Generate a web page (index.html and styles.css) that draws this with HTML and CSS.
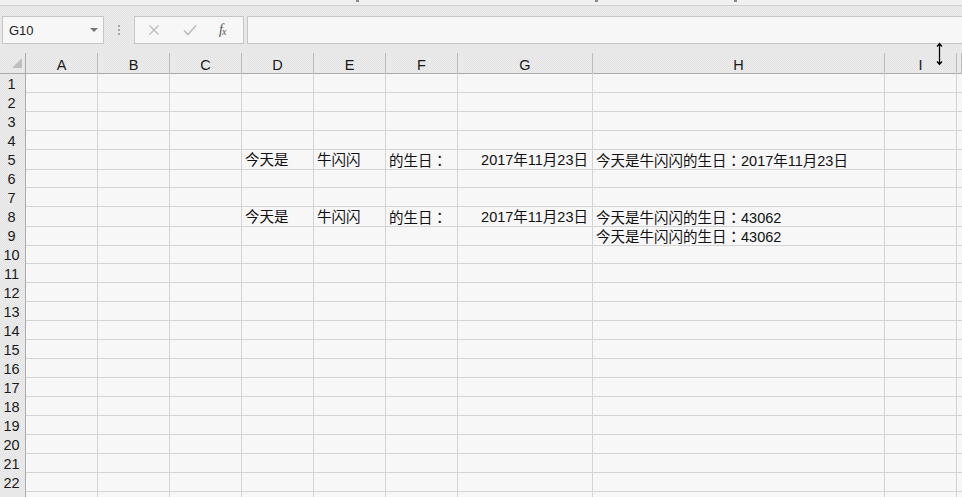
FILE: index.html
```html
<!DOCTYPE html>
<html>
<head>
  <meta charset="UTF-8">
  <title>牛闪闪的生日</title>
  <link rel="stylesheet" href="styles.css">
</head>
<body>
  <div class="topstrip">
    <span class="tick t1"></span><span class="tick t2"></span><span class="tick t3"></span>
  </div>
  <div class="toolband">
    <div class="formulabar">
      <div class="namebox"><span class="ref">G10</span><span class="drop"></span></div>
      <div class="grip"><i></i><i></i><i></i></div>
      <div class="fxbox">
        <svg class="ico" width="12" height="12" viewBox="0 0 12 12"><path d="M1.5 1.5l9 9M10.5 1.5l-9 9" stroke="#bdbdbd" stroke-width="1.3" fill="none"/></svg>
        <svg class="ico" width="14" height="12" viewBox="0 0 14 12"><path d="M1 6.5l4 4L13 1.5" stroke="#bdbdbd" stroke-width="1.6" fill="none"/></svg>
        <span class="fx">f<sub>x</sub></span>
      </div>
      <div class="input"></div>
    </div>
  </div>

  <div class="sheet">
    <div class="row head">
      <div class="corner"><span class="tri"></span></div>
      <div>A</div><div>B</div><div>C</div><div>D</div><div>E</div><div>F</div><div>G</div><div>H</div><div>I</div><div></div>
    </div>
    <div class="row"><div class="rh">1</div><div></div><div></div><div></div><div></div><div></div><div></div><div></div><div></div><div></div><div></div></div>
    <div class="row"><div class="rh">2</div><div></div><div></div><div></div><div></div><div></div><div></div><div></div><div></div><div></div><div></div></div>
    <div class="row"><div class="rh">3</div><div></div><div></div><div></div><div></div><div></div><div></div><div></div><div></div><div></div><div></div></div>
    <div class="row"><div class="rh">4</div><div></div><div></div><div></div><div></div><div></div><div></div><div></div><div></div><div></div><div></div></div>
    <div class="row"><div class="rh">5</div><div></div><div></div><div></div><div>今天是</div><div>牛闪闪</div><div>的生日<span class="colon">：</span></div><div class="num">2017年11月23日</div><div>今天是牛闪闪的生日<span class="colon">：</span>2017年11月23日</div><div></div><div></div></div>
    <div class="row"><div class="rh">6</div><div></div><div></div><div></div><div></div><div></div><div></div><div></div><div></div><div></div><div></div></div>
    <div class="row"><div class="rh">7</div><div></div><div></div><div></div><div></div><div></div><div></div><div></div><div></div><div></div><div></div></div>
    <div class="row"><div class="rh">8</div><div></div><div></div><div></div><div>今天是</div><div>牛闪闪</div><div>的生日<span class="colon">：</span></div><div class="num">2017年11月23日</div><div>今天是牛闪闪的生日<span class="colon">：</span>43062</div><div></div><div></div></div>
    <div class="row"><div class="rh">9</div><div></div><div></div><div></div><div></div><div></div><div></div><div></div><div>今天是牛闪闪的生日<span class="colon">：</span>43062</div><div></div><div></div></div>
    <div class="row"><div class="rh">10</div><div></div><div></div><div></div><div></div><div></div><div></div><div></div><div></div><div></div><div></div></div>
    <div class="row"><div class="rh">11</div><div></div><div></div><div></div><div></div><div></div><div></div><div></div><div></div><div></div><div></div></div>
    <div class="row"><div class="rh">12</div><div></div><div></div><div></div><div></div><div></div><div></div><div></div><div></div><div></div><div></div></div>
    <div class="row"><div class="rh">13</div><div></div><div></div><div></div><div></div><div></div><div></div><div></div><div></div><div></div><div></div></div>
    <div class="row"><div class="rh">14</div><div></div><div></div><div></div><div></div><div></div><div></div><div></div><div></div><div></div><div></div></div>
    <div class="row"><div class="rh">15</div><div></div><div></div><div></div><div></div><div></div><div></div><div></div><div></div><div></div><div></div></div>
    <div class="row"><div class="rh">16</div><div></div><div></div><div></div><div></div><div></div><div></div><div></div><div></div><div></div><div></div></div>
    <div class="row"><div class="rh">17</div><div></div><div></div><div></div><div></div><div></div><div></div><div></div><div></div><div></div><div></div></div>
    <div class="row"><div class="rh">18</div><div></div><div></div><div></div><div></div><div></div><div></div><div></div><div></div><div></div><div></div></div>
    <div class="row"><div class="rh">19</div><div></div><div></div><div></div><div></div><div></div><div></div><div></div><div></div><div></div><div></div></div>
    <div class="row"><div class="rh">20</div><div></div><div></div><div></div><div></div><div></div><div></div><div></div><div></div><div></div><div></div></div>
    <div class="row"><div class="rh">21</div><div></div><div></div><div></div><div></div><div></div><div></div><div></div><div></div><div></div><div></div></div>
    <div class="row"><div class="rh">22</div><div></div><div></div><div></div><div></div><div></div><div></div><div></div><div></div><div></div><div></div></div>
    <div class="row"><div class="rh">23</div><div></div><div></div><div></div><div></div><div></div><div></div><div></div><div></div><div></div><div></div></div>
  </div>

  <svg class="cursor" width="13" height="28" viewBox="0 0 13 28">
    <path d="M6.5 1.5L10.5 6H8V22H10.5L6.5 26.5L2.5 22H5V6H2.5Z" fill="#fff"/>
    <path d="M6.5 3.5V24.5M4 6.5L6.5 3.5L9 6.5M4 21.5L6.5 24.5L9 21.5" stroke="#000" stroke-width="1.4" fill="none"/>
  </svg>
</body>
</html>
```

FILE: styles.css
```css
*{
  margin:0;
  padding:0;
  box-sizing:border-box;
}
body{
  width:962px;
  height:497px;
  overflow:hidden;
  background:#f7f7f7;
  font-family:"Liberation Sans","Noto Sans CJK SC",sans-serif;
  color:#111;
  position:relative;
}
.topstrip{
  height:6px;
  background:#f0f0f0;
  border-bottom:1px solid #d0d0d0;
  position:relative;
}
.tick{
  position:absolute;
  top:0;
  width:3px;
  height:2px;
  background:#8a8a8a;
}
.t1{left:356px;}
.t2{left:595px;}
.t3{left:734px;}

.toolband{
  padding:10px 0 9px 2px;
  background-color:#e8e8e8;
  background-image:repeating-conic-gradient(#e4e4e4 0 25%,#ececec 0 50%);
  background-size:2px 2px;
}
.formulabar{
  display:flex;
  height:28px;
}
.namebox{
  width:102px;
  background:#f7f7f7;
  border:1px solid #c6c6c6;
  display:flex;
  align-items:center;
  justify-content:space-between;
  padding:0 5px 0 6px;
  font-size:13px;
  color:#222;
}
.drop{
  width:0;
  height:0;
  border-left:4px solid transparent;
  border-right:4px solid transparent;
  border-top:4px solid #777;
}
.grip{
  width:30px;
  display:flex;
  flex-direction:column;
  align-items:center;
  justify-content:center;
  gap:2px;
}
.grip i{
  display:block;
  width:2px;
  height:2px;
  background:#a6a6a6;
}
.fxbox{
  width:110px;
  background:#f7f7f7;
  border:1px solid #c6c6c6;
  display:flex;
  align-items:center;
  padding-left:13px;
}
.fxbox .ico{
  margin-right:23px;
}
.fxbox .ico + .ico{
  margin-right:22px;
}
.fx{
  font-family:"Liberation Serif",serif;
  font-style:italic;
  font-size:14px;
  color:#555;
  letter-spacing:-1px;
}
.fx sub{
  font-size:10px;
  vertical-align:-1px;
}
.input{
  flex:1;
  margin-left:3px;
  background:#f7f7f7;
  border:1px solid #c6c6c6;
  border-right:none;
}

.sheet{
  font-size:14.5px;
}
.colon{
  font-family:"Noto Sans CJK TC",sans-serif;
}
.row{
  display:grid;
  grid-template-columns:26px 72px 72px 72px 72px 72px 72px 135px 292px 72px 1fr;
  height:19px;
}
.row > div{
  border-right:1px solid #d4d4d4;
  border-bottom:1px solid #d4d4d4;
  padding:3px 3px 0 3px;
  line-height:16px;
  white-space:nowrap;
}
.row > div.num{
  text-align:right;
  padding-right:4px;
}
.row > .rh{
  background-color:#e8e8e8;
  background-image:repeating-conic-gradient(#e4e4e4 0 25%,#ececec 0 50%);
  background-size:2px 2px;
  border-right:1px solid #ababab;
  border-bottom:1px solid #c8c8c8;
  text-align:center;
  padding:3px 2px 0 0;
  color:#1a1a1a;
}
.head{
  height:20px;
  background-color:#e8e8e8;
  background-image:repeating-conic-gradient(#e4e4e4 0 25%,#ececec 0 50%);
  background-size:2px 2px;
}
.head > div{
  border-right:1px solid #bcbcbc;
  border-bottom:1px solid #ababab;
  text-align:center;
  padding:4px 0 0 0;
  color:#1a1a1a;
}
.head > .corner{
  border-right:1px solid #ababab;
  position:relative;
}
.tri{
  position:absolute;
  left:12px;
  top:5px;
  width:0;
  height:0;
  border-left:10px solid transparent;
  border-bottom:10px solid #bfbfbf;
}
.cursor{
  position:absolute;
  left:933px;
  top:40px;
}
```
